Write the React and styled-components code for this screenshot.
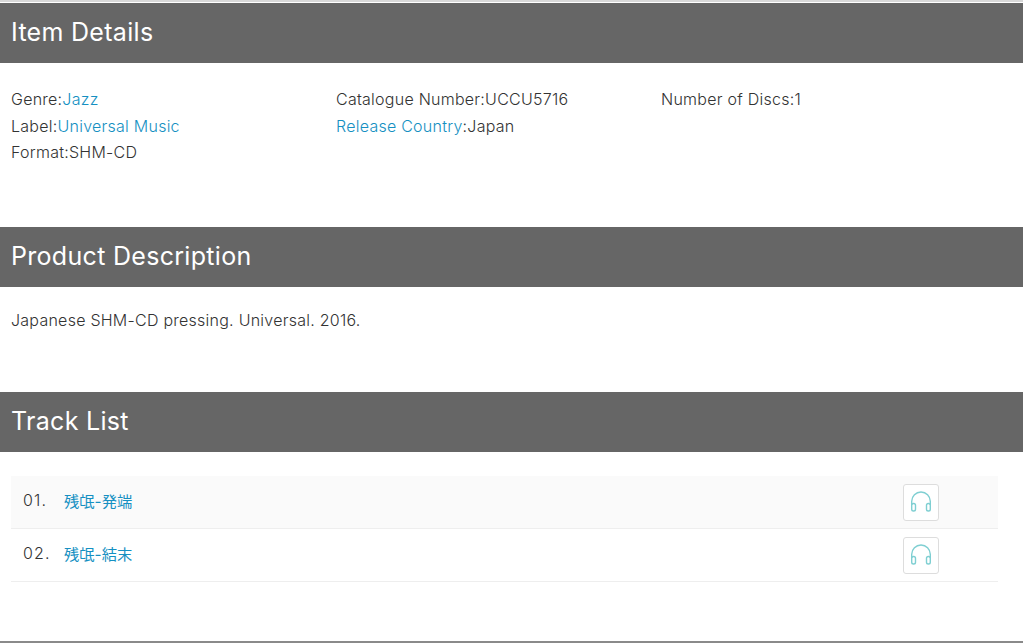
import React from 'react';
import styled, { createGlobalStyle } from 'styled-components';

const GlobalStyle = createGlobalStyle`
  html, body {
    margin: 0;
    padding: 0;
    background: #fff;
  }
  body {
    font-family: Inter, "Noto Sans CJK JP", sans-serif;
    color: #333;
    font-size: 16px;
    font-weight: 350;
    letter-spacing: 0.25px;
  }
`;

const Page = styled.div`
  height: 643px;
  padding-top: 3px;
  box-sizing: border-box;
  overflow: hidden;
  display: flex;
  flex-direction: column;
  border-bottom: 2px solid #8a8a8a;
  background: linear-gradient(#d8d8d8 0, #d8d8d8 2px, #fff 2px);
`;

const SectionTitle = styled.h2`
  margin: 0;
  height: 60px;
  padding: 0 0 2px 11px;
  box-sizing: border-box;
  display: flex;
  align-items: center;
  background: #666;
  color: #fff;
  font-size: 25px;
  font-weight: 400;
  letter-spacing: 0.3px;
  flex: none;
`;

const DetailGrid = styled.div`
  display: grid;
  grid-template-columns: repeat(3, 325px);
  padding: 23px 0 0 11px;
  height: 141px;
`;

const DetailColumn = styled.div`
  display: flex;
  flex-direction: column;
`;

const DetailRow = styled.div`
  height: 26.6px;
  line-height: 26.6px;
  white-space: nowrap;
`;

const TextLink = styled.a`
  color: #1590c2;
  text-decoration: none;
`;

const Description = styled.p`
  margin: 0;
  height: 105px;
  padding: 20px 0 0 11px;
  box-sizing: border-box;
  line-height: 26px;
`;

const TrackTable = styled.ul`
  list-style: none;
  margin: 24px 25px 0 11px;
  padding: 0;
`;

const TrackRow = styled.li`
  height: 53px;
  box-sizing: border-box;
  display: flex;
  align-items: center;
  padding-left: 12px;
  background: ${props => (props.$shaded ? '#fafafa' : '#fff')};
  border-bottom: 1px solid #eee;
`;

const TrackNumber = styled.span`
  width: 41px;
  margin-top: -5px;
  letter-spacing: 1.2px;
`;

const TrackName = styled(TextLink)`
  flex: 1;
  margin-top: -5px;
  font-size: 15.3px;
  font-weight: 400;
  letter-spacing: 0;
`;

const ListenButton = styled.button`
  width: 36px;
  height: 37px;
  margin: 0 59px 0 0;
  padding: 0;
  display: flex;
  align-items: center;
  justify-content: center;
  background: #fff;
  border: 1px solid #ddd;
  border-radius: 3px;
`;

const Headphones = () => (
  <svg width="22" height="22" viewBox="0 0 22 22" fill="none" stroke="#7fcfd2" strokeWidth="1.4">
    <path d="M1.7 14 V10.3 a9.3 9.3 0 0 1 18.6 0 V14" />
    <rect x="1.7" y="12.5" width="3.8" height="7.5" rx="1.8" />
    <rect x="16.5" y="12.5" width="3.8" height="7.5" rx="1.8" />
  </svg>
);

const tracks = [
  { number: '01.', name: '残氓-発端' },
  { number: '02.', name: '残氓-結末' }
];

const App = () => (
  <Page>
    <GlobalStyle />
    <SectionTitle>Item Details</SectionTitle>
    <DetailGrid>
      <DetailColumn>
        <DetailRow>Genre:<TextLink href="#">Jazz</TextLink></DetailRow>
        <DetailRow>Label:<TextLink href="#">Universal Music</TextLink></DetailRow>
        <DetailRow>Format:SHM-CD</DetailRow>
      </DetailColumn>
      <DetailColumn>
        <DetailRow>Catalogue Number:UCCU5716</DetailRow>
        <DetailRow><TextLink href="#">Release Country</TextLink>:Japan</DetailRow>
      </DetailColumn>
      <DetailColumn>
        <DetailRow>Number of Discs:1</DetailRow>
      </DetailColumn>
    </DetailGrid>
    <SectionTitle>Product Description</SectionTitle>
    <Description>Japanese SHM-CD pressing. Universal. 2016.</Description>
    <SectionTitle>Track List</SectionTitle>
    <TrackTable>
      {tracks.map((track, index) => (
        <TrackRow key={track.number} $shaded={index === 0}>
          <TrackNumber>{track.number}</TrackNumber>
          <TrackName href="#">{track.name}</TrackName>
          <ListenButton type="button" aria-label="Listen"><Headphones /></ListenButton>
        </TrackRow>
      ))}
    </TrackTable>
  </Page>
);

export default App;
